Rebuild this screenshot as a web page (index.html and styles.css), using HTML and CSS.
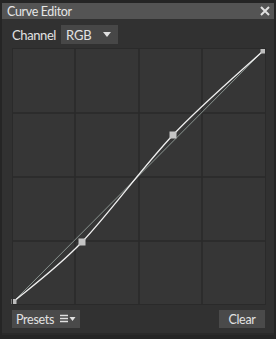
FILE: index.html
```html
<!DOCTYPE html>
<html>
<head>
<meta charset="utf-8">
<link rel="stylesheet" href="styles.css">
</head>
<body>
<div class="window">
  <div class="titlebar">
    <span class="title">Curve Editor</span>
    <svg class="close" width="10" height="10" viewBox="0 0 10 10"><path d="M1 1L9 9M9 1L1 9" stroke="#e0e0e0" stroke-width="2"/></svg>
  </div>
  <div class="panel">
    <div class="channel-row">
      <span class="label">Channel</span>
      <div class="dropdown"><span>RGB</span><svg width="8" height="5" viewBox="0 0 8 5"><path d="M0 0H8L4 5Z" fill="#e0e0e0"/></svg></div>
    </div>
    <div class="graph">
      <svg width="252" height="255" viewBox="0 0 252 255">
        <g stroke="#2a2a2a" stroke-width="1.5">
          <line x1="62" y1="0" x2="62" y2="255"/>
          <line x1="126" y1="0" x2="126" y2="255"/>
          <line x1="189" y1="0" x2="189" y2="255"/>
          <line x1="0" y1="64" x2="252" y2="64"/>
          <line x1="0" y1="128" x2="252" y2="128"/>
          <line x1="0" y1="192" x2="252" y2="192"/>
        </g>
        <line x1="0" y1="253" x2="250" y2="2" stroke="#8a9490" stroke-width="1"/>
        <path d="M0 253 C11.5 243 42.3 220.8 69 193 C95.7 165.2 129.8 117.8 160 86 C190.2 54.2 235 16 250 2" fill="none" stroke="#f0f0f0" stroke-width="1.3"/>
        <rect x="-1.5" y="250" width="5" height="5" fill="#bdbdbd"/>
        <rect x="247.5" y="-0.5" width="5" height="5" fill="#bdbdbd"/>
        <rect x="65.5" y="189.5" width="7" height="7" fill="#c4c4c4"/>
        <rect x="156.5" y="82.5" width="7" height="7" fill="#c4c4c4"/>
      </svg>
    </div>
    <div class="footer">
      <div class="btn presets">Presets <span class="menu-ico"><svg width="16" height="10" viewBox="0 0 16 10"><path d="M0 1.5H8M0 4.5H8M0 7.5H8" stroke="#e0e0e0" stroke-width="1.3"/><path d="M9.5 3H15.5L12.5 7Z" fill="#e0e0e0"/></svg></span></div>
      <div class="btn clear">Clear</div>
    </div>
  </div>
</div>
</body>
</html>
```

FILE: styles.css
```css
html, body {
  margin: 0;
  padding: 0;
  background: #232323;
}
body {
  width: 276px;
  height: 339px;
  font-family: Lato, "Noto Sans", sans-serif;
  color: #e2e2e2;
}
.window {
  width: 276px;
  height: 339px;
  box-sizing: border-box;
  padding: 3px 2px 4px 2px;
  display: flex;
  flex-direction: column;
  background: #252525;
}
.titlebar {
  height: 16px;
  background: #545454;
  display: flex;
  align-items: center;
  justify-content: space-between;
  padding: 0 4px 0 5px;
  flex-shrink: 0;
}
.title {
  font-size: 12.5px;
  letter-spacing: -0.35px;
  color: #e6e6e6;
}
.close { display: block; }
.panel {
  flex: 1;
  background: #313131;
  display: flex;
  flex-direction: column;
  padding: 6px 9px 0 10px;
  border-bottom: 2px solid #2a2a2a;
}
.channel-row {
  display: flex;
  align-items: center;
  height: 19px;
  gap: 5px;
}
.label {
  font-size: 13px;
  letter-spacing: -0.4px;
}
.dropdown {
  width: 57px;
  height: 19px;
  box-sizing: border-box;
  background: #474747;
  display: flex;
  align-items: center;
  justify-content: space-between;
  padding: 0 7px 0 5px;
  font-size: 13px;
  letter-spacing: -0.2px;
}
.dropdown svg { display: block; }
.graph {
  margin-top: 5px;
  margin-left: 1px;
  width: 252px;
  height: 255px;
  background: #363636;
  outline: 1px solid #2a2a2a;
  overflow: visible;
}
.graph svg { display: block; overflow: visible; }
.footer {
  display: flex;
  justify-content: space-between;
  margin-top: 6px;
}
.btn {
  height: 18px;
  background: #4a4a4a;
  display: flex;
  align-items: center;
  font-size: 12.5px;
  letter-spacing: -0.3px;
  box-sizing: border-box;
  color: #e2e2e2;
}
.presets {
  width: 68px;
  padding-left: 4px;
  gap: 6px;
}
.menu-ico svg { display: block; }
.clear {
  width: 46px;
  justify-content: center;
}
```
